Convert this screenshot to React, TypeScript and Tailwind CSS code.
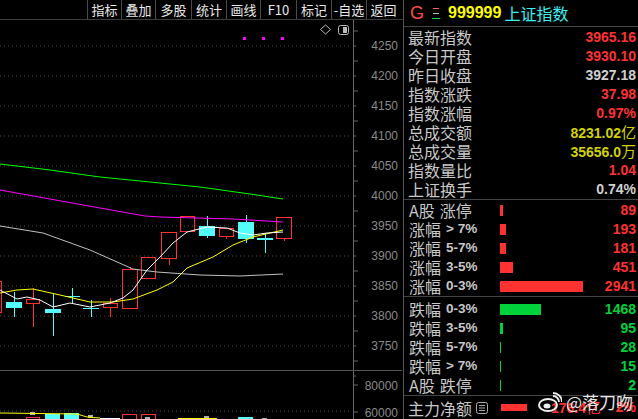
import React from "react";

const RED = "#ff3232";
const GREEN = "#00d23c";
const YELLOW = "#d2d200";
const CYAN = "#54fcfc";

const tools = [
  { t: "指标", w: 34 },
  { t: "叠加", w: 34 },
  { t: "多股", w: 36 },
  { t: "统计", w: 35 },
  { t: "画线", w: 34 },
  { t: "F10", w: 36 },
  { t: "标记", w: 35 },
  { t: "-自选", w: 35 },
  { t: "返回", w: 34 },
];

// x1, x2, bodyTop, bodyBottom, wickTop, wickBottom, up
const candles: [number, number, number, number, number, number, boolean][] = [
  [-6, 1, 281, 312, 281, 312, true],
  [6, 21, 302, 308, 292, 317, false],
  [26, 39, 299, 303, 288, 327, true],
  [45, 60, 309, 313, 294, 336, false],
  [65, 79, 296, 297, 288, 303, false],
  [83, 98, 308, 309, 300, 317, false],
  [103, 117, 303, 307, 298, 317, true],
  [122, 137, 269, 308, 267, 308, true],
  [141, 155, 257, 278, 257, 278, true],
  [161, 176, 232, 258, 232, 265, true],
  [180, 194, 216, 231, 216, 232, true],
  [199, 214, 226, 236, 216, 238, false],
  [219, 233, 228, 236, 228, 239, true],
  [238, 253, 222, 239, 215, 243, false],
  [257, 272, 238, 240, 233, 253, false],
  [276, 291, 217, 238, 217, 241, true],
];

const lines: { c: string; p: string }[] = [
  { c: "#00ff00", p: "0,164 50,170 100,177 150,182 200,187 250,194 283,199" },
  { c: "#ff00ff", p: "0,190 50,199 100,208 145,216 160,217 233,219 283,222" },
  { c: "#c0c0c0", p: "0,226 43,233 90,250 133,269 157,272 200,275 240,276 283,274" },
  {
    c: "#ffff00",
    p: "0,293 17,290 33,289 60,295 90,302 113,302 133,299 157,290 173,282 187,268 213,257 233,245 253,237 283,230",
  },
  {
    c: "#ffffff",
    p: "0,290 17,299 27,297 40,300 53,307 70,303 90,307 110,303 123,298 133,290 147,270 160,257 173,243 187,232 207,227 227,228 240,233 253,235 267,233 283,232",
  },
];

const prices = [4250, 4200, 4150, 4100, 4050, 4000, 3950, 3900, 3850, 3800, 3750];

function Chart() {
  return (
    <svg width={402} height={399} viewBox="0 20 402 399" className="block">
      {prices.map((p, i) => (
        <g key={p}>
          <line x1={0} x2={350} y1={46 + i * 30} y2={46 + i * 30} stroke="#4a4a4a" strokeDasharray="1 3" />
          <text
            x={398}
            y={50 + i * 30}
            textAnchor="end"
            fill="#8a8a8a"
            fontSize={12}
            fontFamily="'Liberation Sans', sans-serif"
          >
            {p}
          </text>
        </g>
      ))}
      {Array.from({ length: 24 }).map((_, i) => (
        <line key={i} x1={353} x2={i % 2 ? 356 : 358} y1={31 + i * 15} y2={31 + i * 15} stroke="#666" />
      ))}
      <line x1={353.5} x2={353.5} y1={20} y2={419} stroke="#666" />
      <line x1={0} x2={403} y1={370.5} y2={370.5} stroke="#555" />
      <line x1={0} x2={350} y1={411} y2={411} stroke="#4a4a4a" strokeDasharray="1 3" />
      <line x1={353} x2={358} y1={385} y2={385} stroke="#666" />
      <line x1={353} x2={358} y1={412} y2={412} stroke="#666" />
      <text x={398} y={390} textAnchor="end" fill="#8a8a8a" fontSize={12} fontFamily="'Liberation Sans', sans-serif">
        80000
      </text>
      <text x={398} y={417} textAnchor="end" fill="#8a8a8a" fontSize={12} fontFamily="'Liberation Sans', sans-serif">
        60000
      </text>

      {/* top markers */}
      <rect x={243} y={37} width={3} height={3} fill="#ff00ff" />
      <rect x={262} y={37} width={3} height={3} fill="#ff00ff" />
      <rect x={281} y={37} width={3} height={3} fill="#ff00ff" />
      <path d="M325.5 25 L330.5 29.5 L325.5 34 L320.5 29.5 Z" fill="none" stroke="#bbb" />
      <rect x={338.5} y={25.5} width={10} height={9} rx={2} fill="none" stroke="#bbb" />
      <rect x={343} y={27} width={4} height={6} fill="#bbb" />

      {candles.map(([x1, x2, bt, bb, wt, wb, up], i) => {
        const cx = Math.round((x1 + x2) / 2) + 0.5;
        const color = up ? RED : CYAN;
        return (
          <g key={i}>
            {wt < bt && <line x1={cx} x2={cx} y1={wt} y2={bt} stroke={color} />}
            {wb > bb && <line x1={cx} x2={cx} y1={bb} y2={wb} stroke={color} />}
            {up ? (
              <rect x={x1 + 0.5} y={bt + 0.5} width={x2 - x1} height={Math.max(bb - bt, 1)} fill="none" stroke={color} />
            ) : (
              <rect x={x1} y={bt} width={x2 - x1 + 1} height={Math.max(bb - bt, 1)} fill={color} />
            )}
          </g>
        );
      })}
      {lines.map((l, i) => (
        <polyline key={i} points={l.p} fill="none" stroke={l.c} strokeWidth={1} />
      ))}

      {/* volume bars peeking in */}
      <rect x={45} y={414} width={15} height={6} fill={CYAN} />
      <rect x={64} y={413} width={15} height={7} fill={CYAN} />
      <rect x={238} y={417} width={15} height={3} fill={CYAN} />
      <rect x={26.5} y={417.5} width={13} height={3} fill="none" stroke={RED} />
      <rect x={122.5} y={414.5} width={14} height={6} fill="none" stroke={RED} />
      <rect x={141.5} y={414.5} width={14} height={6} fill="none" stroke={RED} />
      <rect x={30} y={412} width={5} height={3} fill="#b0b0b0" />
      <rect x={88} y={415} width={5} height={3} fill="#b0b0b0" />
      <rect x={145} y={417} width={5} height={3} fill="#b0b0b0" />
      <rect x={204} y={416} width={5} height={3} fill="#b0b0b0" />
      <rect x={262} y={418} width={5} height={3} fill="#b0b0b0" />
      <polyline points="0,413 77,414 87,417 100,418" fill="none" stroke="#ffff00" />
      <line x1={100} x2={120} y1={418.5} y2={418.5} stroke="#fff" />
      <line x1={178} x2={217} y1={418.5} y2={418.5} stroke="#ffff00" />
    </svg>
  );
}

type Info = { l: string; v: string; c: string };
const info: Info[] = [
  { l: "最新指数", v: "3965.16", c: RED },
  { l: "今日开盘", v: "3930.10", c: RED },
  { l: "昨日收盘", v: "3927.18", c: "#d0d0d0" },
  { l: "指数涨跌", v: "37.98", c: RED },
  { l: "指数涨幅", v: "0.97%", c: RED },
  { l: "总成交额", v: "8231.02亿", c: YELLOW },
  { l: "总成交量", v: "35656.0万", c: YELLOW },
  { l: "指数量比", v: "1.04", c: RED },
  { l: "上证换手", v: "0.74%", c: "#d0d0d0" },
];

type Dist = { a: string; b: string; v: string; w: number };
const ups: Dist[] = [
  { a: "A股", b: "涨停", v: "89", w: 3 },
  { a: "涨幅", b: "> 7%", v: "193", w: 6 },
  { a: "涨幅", b: "5-7%", v: "181", w: 6 },
  { a: "涨幅", b: "3-5%", v: "451", w: 13 },
  { a: "涨幅", b: "0-3%", v: "2941", w: 83 },
];
const downs: Dist[] = [
  { a: "跌幅", b: "0-3%", v: "1468", w: 41 },
  { a: "跌幅", b: "3-5%", v: "95", w: 3 },
  { a: "跌幅", b: "5-7%", v: "28", w: 1 },
  { a: "跌幅", b: "> 7%", v: "15", w: 1 },
  { a: "A股", b: "跌停", v: "2", w: 1 },
];

const cjk = "font-['Noto_Sans_CJK_SC',sans-serif]";
const num = "font-['Liberation_Sans',sans-serif] font-bold";

function DistRow({ d, color }: { d: Dist; color: string }) {
  const isWord = d.b === "涨停" || d.b === "跌停";
  return (
    <div className="flex items-center h-[19px] pl-[5px] pr-[2px]">
      <div className="w-[91px] flex items-center gap-[5px] text-[#c8c8c8]">
        <span className={`${cjk} text-[16px] leading-[19px]`}>{d.a}</span>
        <span className={isWord ? `${cjk} text-[16px] leading-[19px]` : `${num} text-[13.5px]`}>{d.b}</span>
      </div>
      <div className="flex-1 h-[19px] flex items-center">
        <div className="h-[11px]" style={{ width: d.w, backgroundColor: color }} />
      </div>
      <span className={`${num} text-[14px]`} style={{ color }}>
        {d.v}
      </span>
    </div>
  );
}

export default function App() {
  return (
    <div className="w-[638px] h-[419px] bg-black flex overflow-hidden relative">
      <div className="w-[403px] flex flex-col shrink-0">
        <div className="h-[20px] border-b border-[#3c3c3c] flex justify-end pr-[3px] shrink-0">
          {tools.map((t) => (
            <div
              key={t.t}
              className={`h-[19px] border-l border-[#4a4a4a] flex items-center justify-center text-[13px] text-[#e8e8e8] ${cjk}`}
              style={{ width: t.w }}
            >
              {t.t}
            </div>
          ))}
        </div>
        <Chart />
      </div>

      <div className="flex-1 border-l border-[#555] flex flex-col">
        <div className="h-[27px] border-b border-[#444] flex items-center pl-[6px] gap-[6px] shrink-0">
          <span className="font-['Liberation_Sans',sans-serif] text-[18px] text-[#ff4a4a]">G</span>
          <svg width={8} height={12} className="mx-[2px]">
            <line x1={1} x2={7} y1={1.5} y2={1.5} stroke="#ff5a5a" />
            <line x1={1} x2={7} y1={6.5} y2={6.5} stroke="#bbb" />
            <line x1={0} x2={8} y1={11.5} y2={11.5} stroke="#00e040" />
          </svg>
          <span className={`${num} text-[16px] text-[#ffff00]`}>999999</span>
          <span className={`${cjk} text-[16px] text-[#3cf0f0] -ml-[3px]`}>上证指数</span>
        </div>

        <div className="flex flex-col border-b border-[#444] h-[173px] pt-[1px]">
          {info.map((r) => (
            <div key={r.l} className="flex items-center justify-between h-[19px] pl-[4px] pr-[2px]">
              <span className={`${cjk} text-[16px] leading-[19px] text-[#c8c8c8]`}>{r.l}</span>
              <span className={`${num} text-[14px]`} style={{ color: r.c }}>
                {r.v.replace(/[亿万]/, "")}
                {/[亿万]/.test(r.v) && <span className={`${cjk} font-normal text-[15px]`}>{r.v.slice(-1)}</span>}
              </span>
            </div>
          ))}
        </div>

        <div className="flex flex-col border-b border-[#444] h-[97px] pt-[1px]">
          {ups.map((d) => (
            <DistRow key={d.a + d.b} d={d} color={RED} />
          ))}
        </div>

        <div className="flex flex-col border-b border-[#444] h-[99px] pt-[3px]">
          {downs.map((d) => (
            <DistRow key={d.a + d.b} d={d} color={GREEN} />
          ))}
        </div>

        <div className="flex items-center h-[23px] pl-[4px] relative">
          <span className={`${cjk} text-[16px] text-[#c8c8c8]`}>主力净额</span>
          <svg width={12} height={12} className="ml-[4px]">
            <rect x={0.5} y={0.5} width={11} height={11} rx={2} fill="none" stroke="#aaa" />
            <line x1={3} x2={9} y1={3.5} y2={3.5} stroke="#aaa" />
            <line x1={3} x2={9} y1={6} y2={6} stroke="#aaa" />
            <line x1={3} x2={9} y1={8.5} y2={8.5} stroke="#aaa" />
          </svg>
          <div className="ml-[13px] w-[26px] h-[7px]" style={{ backgroundColor: RED }} />
          <span className={`${num} text-[14px] ml-[24px]`} style={{ color: RED }}>
            176.4<span className={`${cjk} font-normal text-[15px]`}>亿</span>
          </span>
          <span className={`${num} text-[14px] ml-auto pr-[2px]`} style={{ color: RED }}>
            2%
          </span>
        </div>
      </div>

      {/* watermark */}
      <div className="absolute left-[538px] top-[392px] flex items-center gap-[4px] text-white/90">
        <svg width={24} height={20} viewBox="0 0 24 20">
          <ellipse cx={10} cy={13} rx={9} ry={6} fill="none" stroke="#eee" strokeWidth={2} />
          <ellipse cx={9} cy={14} rx={3.5} ry={2.5} fill="#eee" />
          <path d="M15 4 A6 6 0 0 1 21 10" fill="none" stroke="#eee" strokeWidth={1.8} />
          <path d="M15 1 A9 9 0 0 1 24 10" fill="none" stroke="#eee" strokeWidth={1.8} />
        </svg>
        <span className={`${cjk} text-[17px] leading-[20px]`}>@落刀吻</span>
      </div>
    </div>
  );
}
